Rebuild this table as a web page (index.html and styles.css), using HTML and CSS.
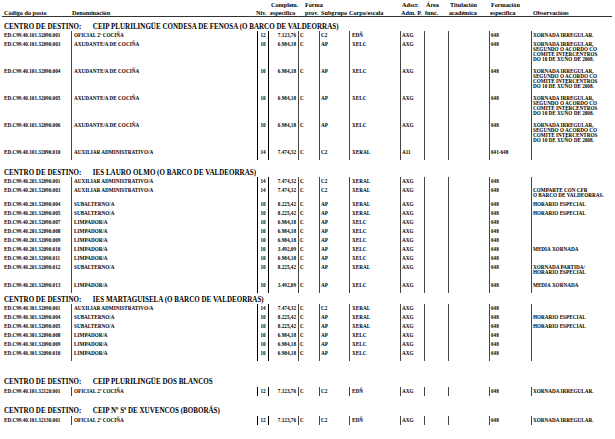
FILE: index.html
```html
<!DOCTYPE html>
<html lang="gl">
<head>
<meta charset="utf-8">
<title>Postos</title>
<link rel="stylesheet" href="styles.css">
</head>
<body>
<div class="page">
  <div class="hdr">
    <div class="h c-code"><span></span><span>Código do posto</span></div>
    <div class="h c-den"><span></span><span>Denominación</span></div>
    <div class="h c-niv"><span></span><span>Niv.</span></div>
    <div class="h c-comp"><span>Complem.</span><span class="l2">específico</span></div>
    <div class="h c-forma"><span>Forma</span><span>prov.</span></div>
    <div class="h c-sub"><span></span><span>Subgrupo</span></div>
    <div class="h c-corpo"><span></span><span>Corpo/escala</span></div>
    <div class="h c-ads"><span>Adscr.</span><span class="l2">Adm. P.</span></div>
    <div class="h c-area"><span>Área</span><span class="l2">func.</span></div>
    <div class="h c-tit"><span>Titulación</span><span class="l2">académica</span></div>
    <div class="h c-form"><span>Formación</span><span>específica</span></div>
    <div class="h c-obs"><span></span><span>Observacións</span></div>
  </div>

  <section class="centro first">
    <h2 class="title"><span class="t"><span class="lbl">CENTRO DE DESTINO:</span><span>CEIP PLURILINGÜE CONDESA DE FENOSA (O BARCO DE VALDEORRAS)</span></span></h2>
    <div class="row"><div>ED.C99.40.101.32090.001</div><div>OFICIAL 2ª COCIÑA</div><div class="n">12</div><div class="r">7.123,76</div><div>C</div><div>C2</div><div>EDÑ</div><div>AXG</div><div></div><div></div><div>648</div><div>XORNADA IRREGULAR.</div></div>
    <div class="row tall"><div>ED.C99.40.101.32090.003</div><div>AXUDANTE/A DE COCIÑA</div><div class="n">10</div><div class="r">6.984,18</div><div>C</div><div>AP</div><div>XELC</div><div>AXG</div><div></div><div></div><div>648</div><div>XORNADA IRREGULAR,<br>SEGUNDO O ACORDO CO<br>COMITÉ INTERCENTROS<br>DO 10 DE XUÑO DE 2008.</div></div>
    <div class="row tall"><div>ED.C99.40.101.32090.004</div><div>AXUDANTE/A DE COCIÑA</div><div class="n">10</div><div class="r">6.984,18</div><div>C</div><div>AP</div><div>XELC</div><div>AXG</div><div></div><div></div><div>648</div><div>XORNADA IRREGULAR,<br>SEGUNDO O ACORDO CO<br>COMITÉ INTERCENTROS<br>DO 10 DE XUÑO DE 2008.</div></div>
    <div class="row tall"><div>ED.C99.40.101.32090.005</div><div>AXUDANTE/A DE COCIÑA</div><div class="n">10</div><div class="r">6.984,18</div><div>C</div><div>AP</div><div>XELC</div><div>AXG</div><div></div><div></div><div>648</div><div>XORNADA IRREGULAR,<br>SEGUNDO O ACORDO CO<br>COMITÉ INTERCENTROS<br>DO 10 DE XUÑO DE 2008.</div></div>
    <div class="row tall"><div>ED.C99.40.101.32090.006</div><div>AXUDANTE/A DE COCIÑA</div><div class="n">10</div><div class="r">6.984,18</div><div>C</div><div>AP</div><div>XELC</div><div>AXG</div><div></div><div></div><div>648</div><div>XORNADA IRREGULAR,<br>SEGUNDO O ACORDO CO<br>COMITÉ INTERCENTROS<br>DO 10 DE XUÑO DE 2008.</div></div>
    <div class="row end"><div>ED.C99.40.101.32090.010</div><div>AUXILIAR ADMINISTRATIVO/A</div><div class="n">14</div><div class="r">7.474,32</div><div>C</div><div>C2</div><div>XERAL</div><div>A11</div><div></div><div></div><div>641-648</div><div></div></div>
  </section>

  <section class="centro gap-md">
    <h2 class="title"><span class="t"><span class="lbl">CENTRO DE DESTINO:</span><span>IES LAURO OLMO (O BARCO DE VALDEORRAS)</span></span></h2>
    <div class="row"><div>ED.C99.40.201.32090.001</div><div>AUXILIAR ADMINISTRATIVO/A</div><div class="n">14</div><div class="r">7.474,32</div><div>C</div><div>C2</div><div>XERAL</div><div>AXG</div><div></div><div></div><div>648</div><div></div></div>
    <div class="row"><div>ED.C99.40.201.32090.003</div><div>AUXILIAR ADMINISTRATIVO/A</div><div class="n">14</div><div class="r">7.474,32</div><div>C</div><div>C2</div><div>XERAL</div><div>AXG</div><div></div><div></div><div>648</div><div>COMPARTE CON CFR<br>O BARCO DE VALDEORRAS.</div></div>
    <div class="row"><div>ED.C99.40.201.32090.004</div><div>SUBALTERNO/A</div><div class="n">10</div><div class="r">8.225,42</div><div>C</div><div>AP</div><div>XERAL</div><div>AXG</div><div></div><div></div><div>648</div><div>HORARIO ESPECIAL</div></div>
    <div class="row"><div>ED.C99.40.201.32090.005</div><div>SUBALTERNO/A</div><div class="n">10</div><div class="r">8.225,42</div><div>C</div><div>AP</div><div>XERAL</div><div>AXG</div><div></div><div></div><div>648</div><div>HORARIO ESPECIAL</div></div>
    <div class="row"><div>ED.C99.40.201.32090.007</div><div>LIMPADOR/A</div><div class="n">10</div><div class="r">6.984,18</div><div>C</div><div>AP</div><div>XELC</div><div>AXG</div><div></div><div></div><div>648</div><div></div></div>
    <div class="row"><div>ED.C99.40.201.32090.008</div><div>LIMPADOR/A</div><div class="n">10</div><div class="r">6.984,18</div><div>C</div><div>AP</div><div>XELC</div><div>AXG</div><div></div><div></div><div>648</div><div></div></div>
    <div class="row"><div>ED.C99.40.201.32090.009</div><div>LIMPADOR/A</div><div class="n">10</div><div class="r">6.984,18</div><div>C</div><div>AP</div><div>XELC</div><div>AXG</div><div></div><div></div><div>648</div><div></div></div>
    <div class="row"><div>ED.C99.40.201.32090.010</div><div>LIMPADOR/A</div><div class="n">10</div><div class="r">3.492,09</div><div>C</div><div>AP</div><div>XELC</div><div>AXG</div><div></div><div></div><div>648</div><div>MEDIA XORNADA</div></div>
    <div class="row"><div>ED.C99.40.201.32090.011</div><div>LIMPADOR/A</div><div class="n">10</div><div class="r">6.984,18</div><div>C</div><div>AP</div><div>XELC</div><div>AXG</div><div></div><div></div><div>648</div><div></div></div>
    <div class="row wide"><div>ED.C99.40.201.32090.012</div><div>SUBALTERNO/A</div><div class="n">10</div><div class="r">8.225,42</div><div>C</div><div>AP</div><div>XERAL</div><div>AXG</div><div></div><div></div><div>648</div><div>XORNADA PARTIDA/<br>HORARIO ESPECIAL</div></div>
    <div class="row end"><div>ED.C99.40.201.32090.013</div><div>LIMPADOR/A</div><div class="n">10</div><div class="r">3.492,09</div><div>C</div><div>AP</div><div>XELC</div><div>AXG</div><div></div><div></div><div>648</div><div>MEDIA XORNADA</div></div>
  </section>

  <section class="centro gap-xs">
    <h2 class="title"><span class="t"><span class="lbl">CENTRO DE DESTINO:</span><span>IES MARTAGUISELA (O BARCO DE VALDEORRAS)</span></span></h2>
    <div class="row"><div>ED.C99.40.301.32090.001</div><div>AUXILIAR ADMINISTRATIVO/A</div><div class="n">14</div><div class="r">7.474,32</div><div>C</div><div>C2</div><div>XERAL</div><div>AXG</div><div></div><div></div><div>648</div><div></div></div>
    <div class="row"><div>ED.C99.40.301.32090.004</div><div>SUBALTERNO/A</div><div class="n">10</div><div class="r">8.225,42</div><div>C</div><div>AP</div><div>XERAL</div><div>AXG</div><div></div><div></div><div>648</div><div>HORARIO ESPECIAL</div></div>
    <div class="row"><div>ED.C99.40.301.32090.005</div><div>SUBALTERNO/A</div><div class="n">10</div><div class="r">8.225,42</div><div>C</div><div>AP</div><div>XERAL</div><div>AXG</div><div></div><div></div><div>648</div><div>HORARIO ESPECIAL</div></div>
    <div class="row"><div>ED.C99.40.301.32090.008</div><div>LIMPADOR/A</div><div class="n">10</div><div class="r">6.984,18</div><div>C</div><div>AP</div><div>XELC</div><div>AXG</div><div></div><div></div><div>648</div><div></div></div>
    <div class="row"><div>ED.C99.40.301.32090.009</div><div>LIMPADOR/A</div><div class="n">10</div><div class="r">6.984,18</div><div>C</div><div>AP</div><div>XELC</div><div>AXG</div><div></div><div></div><div>648</div><div></div></div>
    <div class="row end"><div>ED.C99.40.301.32090.010</div><div>LIMPADOR/A</div><div class="n">10</div><div class="r">6.984,18</div><div>C</div><div>AP</div><div>XELC</div><div>AXG</div><div></div><div></div><div>648</div><div></div></div>
  </section>

  <section class="centro gap-lg">
    <h2 class="title"><span class="t"><span class="lbl">CENTRO DE DESTINO:</span><span>CEIP PLURILINGÜE DOS BLANCOS</span></span></h2>
    <div class="row single"><div>ED.C99.40.101.32120.001</div><div>OFICIAL 2ª COCIÑA</div><div class="n">12</div><div class="r">7.123,76</div><div>C</div><div>C2</div><div>EDÑ</div><div>AXG</div><div></div><div></div><div>648</div><div>XORNADA IRREGULAR.</div></div>
  </section>

  <section class="centro gap-sm">
    <h2 class="title"><span class="t"><span class="lbl">CENTRO DE DESTINO:</span><span>CEIP Nº Sª DE XUVENCOS (BOBORÁS)</span></span></h2>
    <div class="row single"><div>ED.C99.40.101.32130.001</div><div>OFICIAL 2ª COCIÑA</div><div class="n">12</div><div class="r">7.123,76</div><div>C</div><div>C2</div><div>EDÑ</div><div>AXG</div><div></div><div></div><div>648</div><div>XORNADA IRREGULAR.</div></div>
  </section>
</div>
</body>
</html>
```

FILE: styles.css
```css
* { box-sizing: border-box; }
html, body { margin: 0; padding: 0; background: #fff; }
body {
  font-family: "Liberation Serif", "Times New Roman", serif;
  color: #000;
}
.page {
  padding: 0 3px 0 2px;
  width: 615px;
}

/* header */
.hdr {
  display: grid;
  grid-template-columns: 69px 186px 11px 30px 21px 30px 51px 24px 24px 41px 42px 81px;
  border-bottom: 1px solid #333;
  height: 17px;
  padding-top: 1px;
  font-size: 6.2px;
  font-weight: bold;
  line-height: 7.5px;
}
.h {
  display: flex;
  flex-direction: column;
  white-space: nowrap;
}
.h span { display: block; height: 7.5px; }
.c-code { padding-left: 2px; }
.c-den { padding-left: 1px; }
.c-niv { padding-left: 0; margin-left: -1px; }
.c-comp { padding-left: 3px; }
.c-comp .l2 { margin-left: -1px; }
.c-forma { padding-left: 7px; }
.c-sub { padding-left: 2px; }
.c-corpo { padding-left: 0; }
.c-ads { padding-left: 2px; }
.c-ads .l2 { margin-left: -1px; }
.c-area { padding-left: 2px; }
.c-area .l2 { margin-left: -1px; }
.c-tit { padding-left: 2px; }
.c-tit .l2 { margin-left: -1px; }
.c-form { padding-left: 2px; }
.c-form span + span { margin-left: -1px; }
.c-obs { padding-left: 2px; }

/* section */
.centro.first { padding-top: 4px; }
.centro.gap-md { padding-top: 7px; }
.centro.gap-xs { padding-top: 1px; }
.centro.gap-lg { padding-top: 15px; }
.centro.gap-sm { padding-top: 8.5px; }
.title {
  margin: 0;
  height: 10px;
  font-size: 8.8px;
  line-height: 10px;
  font-weight: bold;
  padding-left: 2px;
  white-space: nowrap;
}
.title .t {
  display: inline-block;
  transform: scaleX(0.8);
  transform-origin: 0 50%;
}
.lbl { display: inline-block; width: 111px; }
.single { margin-top: 1px; }

/* rows */
.row {
  display: grid;
  grid-template-columns: 69px 186px 11px 30px 21px 30px 51px 24px 24px 41px 42px 81px;
  font-size: 5.2px;
  font-weight: bold;
  line-height: 5px;
}
.row > div {
  border-left: 1px solid #444;
  padding: 2px 1px 2px 1px;
  white-space: nowrap;
}
.row > div:first-child { border-left: none; padding-left: 2px; }
.row > div:nth-child(2) { padding-left: 2px; }
.row > div:nth-child(7) { padding-left: 2px; }
.row > div.n {
  text-align: center;
  padding-left: 0;
  padding-right: 0;
  border-left-color: #000;
}
.row > div.r {
  text-align: right;
  padding-right: 2px;
  border-left-color: #000;
}
.row.tall > div { padding-bottom: 5px; }
.row.wide > div { padding-bottom: 6px; }
.row.end > div { padding-bottom: 5px; }
```
